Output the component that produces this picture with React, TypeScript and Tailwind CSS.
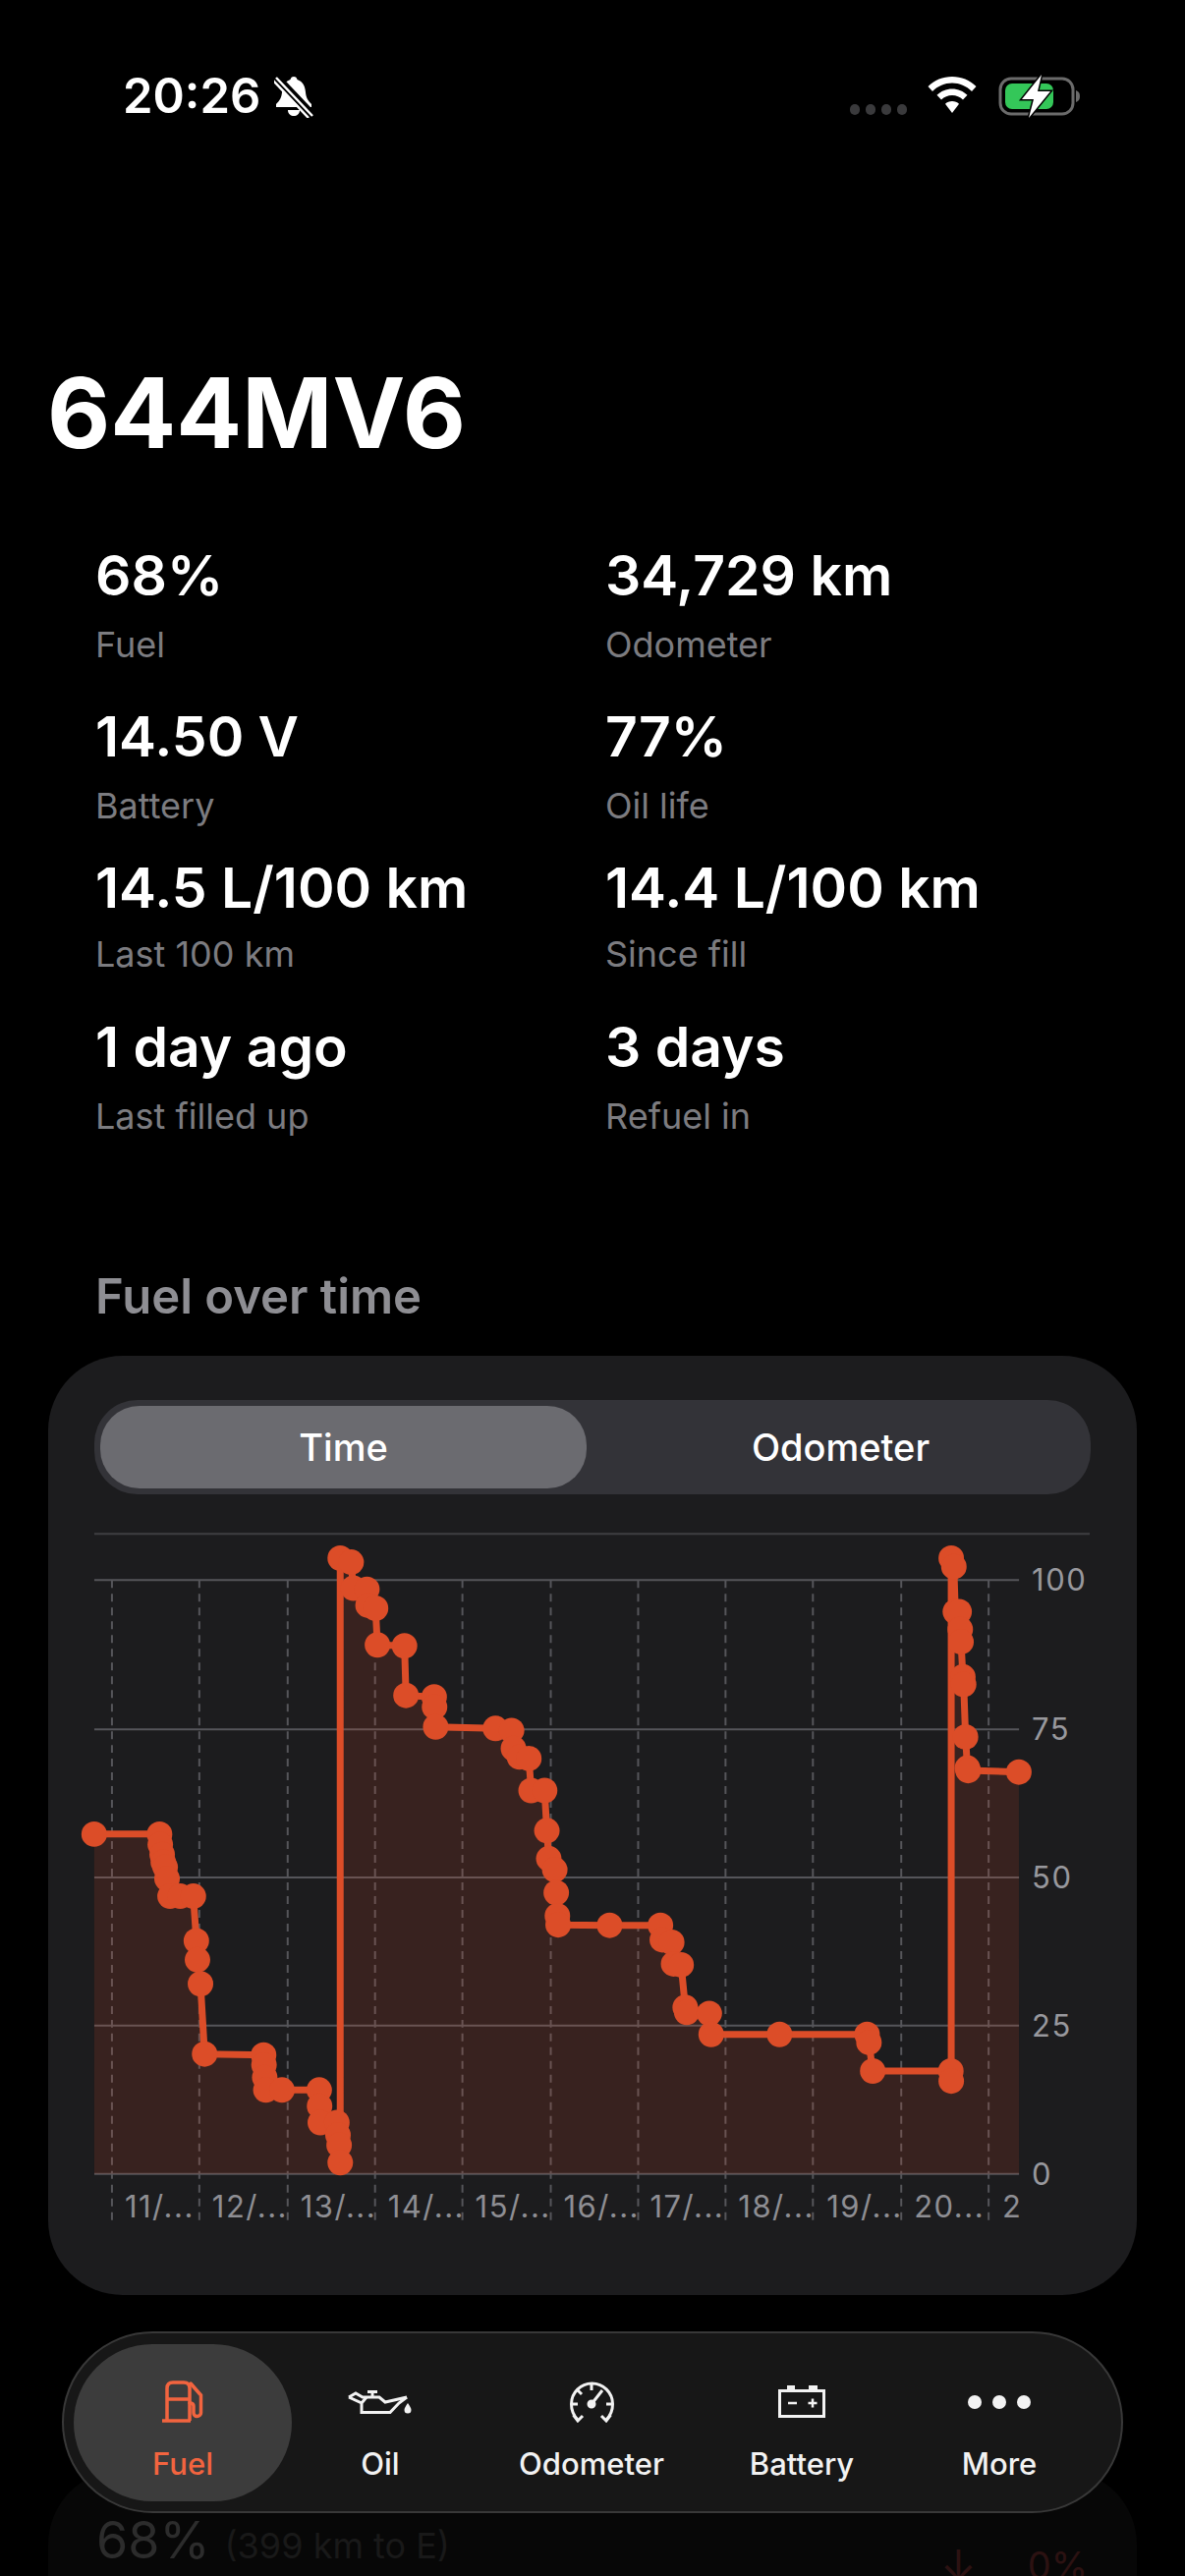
import { ReactNode } from "react";

const ACCENT = "#dc4d28";

// chart points, read off the screenshot in page pixels
const POINTS_LEFT: [number, number][] = [
  [146, 719], [320, 719], [322, 740], [327, 760], [330, 775], [335, 785], [340, 808], [348, 843], [375, 843], [410, 843],
  [418, 932], [421, 970], [429, 1018], [440, 1158], [597, 1160], [598, 1180], [600, 1205], [603, 1230], [646, 1230], [745, 1230],
  [746, 1262], [748, 1295], [792, 1295], [795, 1320], [798, 1340], [801, 1375], [801, 168], [830, 176], [836, 228], [872, 230],
  [875, 262], [895, 268], [900, 341], [972, 343], [976, 442], [1051, 445], [1052, 465], [1055, 505], [1214, 508], [1257, 512],
  [1262, 548], [1278, 565], [1303, 568], [1309, 632], [1345, 632], [1351, 712], [1356, 768], [1372, 790], [1376, 836], [1379, 882],
  [1381, 900], [1518, 901],
];
const POINTS_RIGHT: [number, number][] = [
  [190, 901], [195, 930], [220, 935], [225, 978], [245, 980], [256, 1065], [260, 1075], [320, 1077], [325, 1119], [507, 1119],
  [740, 1119], [745, 1135], [755, 1192], [963, 1192], [964, 1212], [964, 168], [971, 185], [975, 275], [985, 275], [988, 310],
  [990, 335], [995, 405], [997, 420], [1002, 525], [1007, 587], [1009, 592], [1144, 595],
];
const POINTS = [
  ...POINTS_LEFT.map(([x, y]) => [40 + x * 0.3827, 1500 + y * 0.5102]),
  ...POINTS_RIGHT.map(([x, y]) => [600 + x * 0.3827, 1500 + y * 0.5102]),
];
const LINE = POINTS.map(([x, y]) => `${x.toFixed(1)},${y.toFixed(1)}`).join(" ");

const Y_TICKS = [
  { label: "100", y: 1608 },
  { label: "75", y: 1760 },
  { label: "50", y: 1911 },
  { label: "25", y: 2062 },
  { label: "0", y: 2213 },
];
const X_GRID = [114, 203, 293, 382, 471, 561, 650, 739, 828, 918, 1007];
const X_LABELS = [
  { label: "11/...", x: 127 },
  { label: "12/...", x: 216 },
  { label: "13/...", x: 306 },
  { label: "14/...", x: 395 },
  { label: "15/...", x: 484 },
  { label: "16/...", x: 574 },
  { label: "17/...", x: 662 },
  { label: "18/...", x: 752 },
  { label: "19/...", x: 842 },
  { label: "20...", x: 931 },
  { label: "2", x: 1021 },
];

// row spacing isn't even in the screenshot, so each row carries its own gaps
const STATS = [
  { rowClass: "", labelClass: "mt-[14px]", cells: [{ value: "68%", label: "Fuel" }, { value: "34,729 km", label: "Odometer" }] },
  { rowClass: "mt-[38px]", labelClass: "mt-[14px]", cells: [{ value: "14.50 V", label: "Battery" }, { value: "77%", label: "Oil life" }] },
  { rowClass: "mt-[28px]", labelClass: "mt-[11px]", cells: [{ value: "14.5 L/100 km", label: "Last 100 km" }, { value: "14.4 L/100 km", label: "Since fill" }] },
  { rowClass: "mt-[39px]", labelClass: "mt-[14px]", cells: [{ value: "1 day ago", label: "Last filled up" }, { value: "3 days", label: "Refuel in" }] },
];

function StatusBar() {
  return (
    <div className="flex items-start justify-between pl-[125px] pr-[106px] pt-[72px]">
      <div className="flex items-center gap-[14px]">
        <span className="text-[49px] leading-[52px] font-semibold text-white">20:26</span>
        <svg width="40" height="44" viewBox="0 0 40 44" fill="none">
          <path d="M20 2c2 0 3 1 3.500 3 6 2 8 7 8.500 13 .5 5 2 8 6 12v3H2v-3c4-4 5.500-7 6-12 .5-6 2.500-11 8.500-13C17 3 18 2 20 2z" fill="#fff" />
          <path d="M14 36h12c0 4-3 6-6 6s-6-2-6-6z" fill="#fff" />
          <path d="M1 1l38 40" stroke="#000" strokeWidth="8" />
          <path d="M2 3l37 39M-1 6l36 38" stroke="#fff" strokeWidth="2.500" />
        </svg>
      </div>
      <div className="flex items-start pt-[6px]">
        <div className="flex gap-[6px] pt-[28px] mr-[21px]">
          {[0, 1, 2, 3].map((i) => (
            <div key={i} className="w-[10px] h-[11px] rounded-full bg-[#3a3a3c]" />
          ))}
        </div>
        <svg width="50" height="38" viewBox="0 0 50 38" fill="#fff" className="mr-[22px]">
          <path d="M25 0c9.500 0 18 3.500 24.500 10L45 15C39.500 9.500 32.500 6.500 25 6.500S10.500 9.500 5 15L.5 10C7 3.500 15.500 0 25 0z" />
          <path d="M25 12.500c6 0 11.500 2.300 15.500 6.300L36 23.500c-3-3-6.800-4.600-11-4.600s-8 1.600-11 4.600L9.500 18.800C13.500 14.800 19 12.500 25 12.500z" />
          <path d="M25 25c2.800 0 5.200 1 7 2.800L25 37l-7-9.200C19.800 26 22.200 25 25 25z" />
        </svg>
        <svg width="84" height="44" viewBox="0 0 84 44" fill="none" className="-mt-[2px]">
          <rect x="2" y="4" width="74" height="36" rx="11" stroke="#6b6b6b" strokeWidth="3" />
          <rect x="7" y="9" width="49" height="26" rx="7" fill="#34c759" />
          <path d="M79 16c3 1 4 3 4 6s-1 5-4 6z" fill="#6b6b6b" />
          <path d="M44 0L24 25h12l-5 19 22-27H40z" fill="#fff" stroke="#000" strokeWidth="3" paintOrder="stroke" />
        </svg>
      </div>
    </div>
  );
}

function FuelChart() {
  return (
    <svg viewBox="49 1540 1109 760" className="block w-full h-[760px]" fill="none">
      <line x1="96" x2="1110" y1="1561" y2="1561" stroke="#3f3f42" strokeWidth="2" />
      {Y_TICKS.map((t) => (
        <line key={t.label} x1="96" x2="1038" y1={t.y} y2={t.y} stroke="#55555a" strokeWidth="2" />
      ))}
      {X_GRID.map((x) => (
        <line key={x} x1={x} x2={x} y1="1608" y2="2261" stroke="#55555a" strokeWidth="2" strokeDasharray="8 6" />
      ))}
      <polygon points={`96,2213 ${LINE} 1038,2213`} fill={ACCENT} fillOpacity="0.15" />
      <polyline points={LINE} stroke={ACCENT} strokeWidth="7" strokeLinejoin="round" />
      {POINTS.map(([x, y], i) => (
        <circle key={i} cx={x} cy={y} r="13" fill={ACCENT} />
      ))}
      {Y_TICKS.map((t) => (
        <text key={t.label} x="1051" y={t.y + 11} fontSize="31" fill="#98989d" letterSpacing="1.5">
          {t.label}
        </text>
      ))}
      {X_LABELS.map((l) => (
        <text key={l.x} x={l.x} y="2257" fontSize="31" fill="#8e8e93" letterSpacing="1.5">
          {l.label}
        </text>
      ))}
    </svg>
  );
}

function NavItem({ label, width, icon, active }: { label: string; width: string; icon: ReactNode; active?: boolean }) {
  return (
    <div className={`${width} shrink-0 flex flex-col items-center h-[160px] ${active ? "bg-[#3c3c3c] rounded-[80px]" : ""}`}>
      <div className="h-[84px] flex items-center justify-center pt-[34px]">{icon}</div>
      <span className={`text-[31px] leading-[36px] font-medium mt-[20px] ${active ? "text-[#f2643f]" : "text-[#f2f2f2]"}`}>{label}</span>
    </div>
  );
}

function BottomNav() {
  return (
    <div className="absolute left-[63px] top-[2373px] w-[1080px] h-[185px] rounded-[93px] bg-[#171717] border-2 border-[#383838] flex items-center pl-[10px]">
      <NavItem
        label="Fuel"
        width="w-[222px]"
        active
        icon={
          <svg width="42" height="43" viewBox="0 0 42 43" fill="none" stroke="#f2643f" strokeWidth="3.500">
            <path d="M0 41h29" />
            <path d="M5 41V8c0-4 2-6 6-6h11c4 0 6 2 6 6v33M5 19h23" />
            <path d="M28 23c2.500 0 4 1 4 3v7c0 2 1.500 3.500 3.500 3.500s4-1.500 4-3.500V15L29 3" strokeLinecap="round" />
          </svg>
        }
      />
      <NavItem
        label="Oil"
        width="w-[180px]"
        icon={
          <svg width="66" height="24" viewBox="0 0 66 24" fill="none" stroke="#f2f2f2" strokeWidth="3">
            <path d="M1 7l7-4 7 4h17l6 5 22-5" />
            <path d="M1 7l13 6v9.500h29L52 13l8-6M14 13l5-6" />
            <path d="M20 1.500h10M25 1.500V7" />
            <path d="M61 13c2 3 3.500 5 3.500 7a3.500 3.500 0 0 1-7 0c0-2 1.500-4 3.500-7z" fill="#f2f2f2" stroke="none" />
          </svg>
        }
      />
      <NavItem
        label="Odometer"
        width="w-[250px]"
        icon={
          <svg width="45" height="42" viewBox="0 0 45 42" fill="none" stroke="#f2f2f2" strokeWidth="3">
            <path d="M8 39C4 35 1.500 29 1.500 23a21 21 0 0 1 42 0c0 6-2.500 12-6.500 16" />
            <path d="M3.500 34L8 40l5-5M41.500 34L37 40l-5-5" />
            <path d="M22 2v7M8 9l4 4M2 23h6M37 23h6M22 23L33 9" />
            <circle cx="22" cy="23" r="3" fill="#f2f2f2" />
          </svg>
        }
      />
      <NavItem
        label="Battery"
        width="w-[178px]"
        icon={
          <svg width="48" height="33" viewBox="0 0 48 33" fill="none" stroke="#f2f2f2" strokeWidth="3">
            <path d="M1.500 5.500h45v26h-45z" />
            <path d="M9 0h8v4H9zM31 0h9v4h-9z" fill="#f2f2f2" stroke="none" />
            <path d="M10 18h9M30.500 18h9M35 13.500v9" strokeWidth="2.500" />
          </svg>
        }
      />
      <NavItem
        label="More"
        width="w-[224px]"
        icon={
          <div className="flex gap-[11px]">
            <div className="w-[14px] h-[14px] rounded-full bg-[#f2f2f2]" />
            <div className="w-[14px] h-[14px] rounded-full bg-[#f2f2f2]" />
            <div className="w-[14px] h-[14px] rounded-full bg-[#f2f2f2]" />
          </div>
        }
      />
    </div>
  );
}

export default function App() {
  return (
    <div className="relative w-[1206px] h-[2622px] overflow-hidden bg-black text-white [font-family:Inter,sans-serif]">
      <StatusBar />

      <h1 className="mt-[241px] ml-[48px] text-[99px] leading-[110px] font-bold text-white">644MV6</h1>

      {/* Stats */}
      <div className="mt-[77px] pl-[97px]">
        {STATS.map((row, i) => (
          <div key={i} className={`grid grid-cols-[519px_1fr] ${row.rowClass}`}>
            {row.cells.map((s) => (
              <div key={s.label}>
                <div className="text-[57px] leading-[68px] font-semibold text-white">{s.value}</div>
                <div className={`text-[36px] leading-[44px] text-[#7c7c80] ${row.labelClass}`}>{s.label}</div>
              </div>
            ))}
          </div>
        ))}
      </div>

      <div className="mt-[132px] ml-[97px] text-[49px] leading-[60px] font-semibold text-[#8e8e93]">Fuel over time</div>

      {/* Chart card */}
      <div className="mt-[30px] mx-[49px] h-[956px] rounded-[76px] bg-[#1c1c1e] pt-[45px]">
        <div className="mx-[47px] h-[96px] rounded-[44px] bg-[#333338] flex items-center pl-[6px]">
          <div className="w-[495px] h-[84px] rounded-[40px] bg-[#6b6b70] flex items-center justify-center text-[38px] font-medium text-white">
            Time
          </div>
          <div className="flex-1 flex items-center justify-center text-[38px] font-medium text-white pl-[4px]">Odometer</div>
        </div>
        <div className="mt-[19px]">
          <FuelChart />
        </div>
      </div>

      {/* Next section, mostly hidden behind the tab bar */}
      <div className="mt-[178px] mx-[49px] h-[300px] rounded-[76px] bg-[#070707] flex items-start justify-between pl-[49px] pr-[50px] pt-[42px]">
        <div className="flex items-baseline gap-[15px]">
          <span className="text-[52px] leading-[60px] text-[#2c2c2c]">68%</span>
          <span className="text-[36px] leading-[60px] text-[#191919]">(399 km to E)</span>
        </div>
        <div className="flex items-center gap-[52px] pt-[30px] text-[#2c1212]">
          <span className="text-[44px] leading-[50px]">↓</span>
          <span className="text-[38px] leading-[50px]">0%</span>
        </div>
      </div>

      <BottomNav />
    </div>
  );
}
